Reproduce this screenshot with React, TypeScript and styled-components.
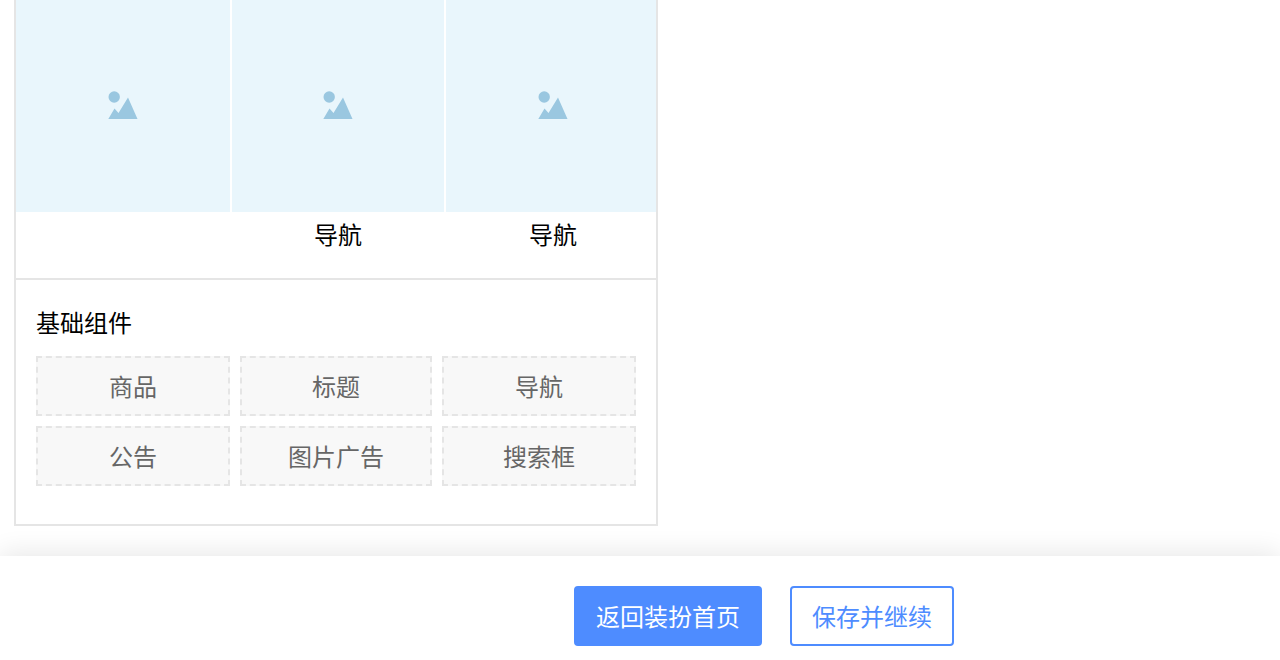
import styled, { createGlobalStyle } from 'styled-components';

const GlobalStyle = createGlobalStyle`
  html, body {
    margin: 0;
    height: 660px;
    overflow: hidden;
    background: #fff;
    font-family: "Noto Sans CJK SC", "Noto Sans", sans-serif;
  }
  #root {
    height: 100%;
  }
`;

const Page = styled.div`
  height: 660px;
  display: flex;
  flex-direction: column;
  box-sizing: border-box;
`;

const Main = styled.main`
  flex: 1;
  padding-left: 14px;
`;

const Panel = styled.section`
  width: 644px;
  box-sizing: border-box;
  border: 2px solid #e5e5e5;
  border-top: 0;
  overflow: hidden;
`;

const NavRow = styled.div`
  display: grid;
  grid-template-columns: 214px 212px 214px;
  column-gap: 2px;
  height: 278px;
  border-bottom: 2px solid #e5e5e5;
`;

const NavCell = styled.div`
  display: flex;
  flex-direction: column;
  align-items: center;
  width: 100%;
`;

const Thumb = styled.div`
  width: 100%;
  height: 212px;
  display: flex;
  align-items: center;
  justify-content: center;
  background: #e9f6fc;
`;

const NavLabel = styled.span`
  font-size: 24px;
  line-height: 44px;
  color: #000;
`;

const Components = styled.div`
  padding: 20px 20px 38px;
`;

const Title = styled.h3`
  margin: 0 0 12px;
  font-size: 24px;
  font-weight: 400;
  line-height: 44px;
  color: #000;
`;

const Grid = styled.div`
  display: grid;
  grid-template-columns: 194px 192px 194px;
  grid-auto-rows: 60px;
  gap: 10px;
`;

const Chip = styled.div`
  display: flex;
  align-items: center;
  justify-content: center;
  box-sizing: border-box;
  padding-bottom: 2px;
  border: 2px dashed #e5e5e5;
  background: #f8f8f8;
  font-size: 24px;
  color: #666;
`;

const Footer = styled.footer`
  height: 104px;
  box-sizing: border-box;
  padding: 30px 326px 0 574px;
  display: flex;
  gap: 28px;
  background: #fff;
  box-shadow: 0 -4px 24px rgba(0, 0, 0, 0.09);
`;

const Button = styled.button<{ $primary?: boolean }>`
  height: 60px;
  padding: 0 20px 2px;
  box-sizing: border-box;
  border: 2px solid #4e8cff;
  border-radius: 4px;
  font-family: inherit;
  font-size: 24px;
  white-space: nowrap;
  color: ${p => (p.$primary ? '#fff' : '#4e8cff')};
  background: ${p => (p.$primary ? '#4e8cff' : '#fff')};
`;

function PictureIcon() {
  return (
    <svg width="30" height="30" viewBox="0 0 30 30">
      <circle cx="6.2" cy="6" r="5.7" fill="#9ac7e0" />
      <path d="M0.3 28 L6.5 17.5 L10.5 22 L20 6.5 L29.5 28 Z" fill="#9ac7e0" />
    </svg>
  );
}

const navCells = ['', '导航', '导航'];
const chips = ['商品', '标题', '导航', '公告', '图片广告', '搜索框'];

export default function App() {
  return (
    <Page>
      <GlobalStyle />
      <Main>
        <Panel>
          <NavRow>
            {navCells.map((label, index) => (
              <NavCell key={index}>
                <Thumb>
                  <PictureIcon />
                </Thumb>
                <NavLabel>{label}</NavLabel>
              </NavCell>
            ))}
          </NavRow>
          <Components>
            <Title>基础组件</Title>
            <Grid>
              {chips.map(chip => (
                <Chip key={chip}>{chip}</Chip>
              ))}
            </Grid>
          </Components>
        </Panel>
      </Main>
      <Footer>
        <Button $primary>返回装扮首页</Button>
        <Button>保存并继续</Button>
      </Footer>
    </Page>
  );
}
